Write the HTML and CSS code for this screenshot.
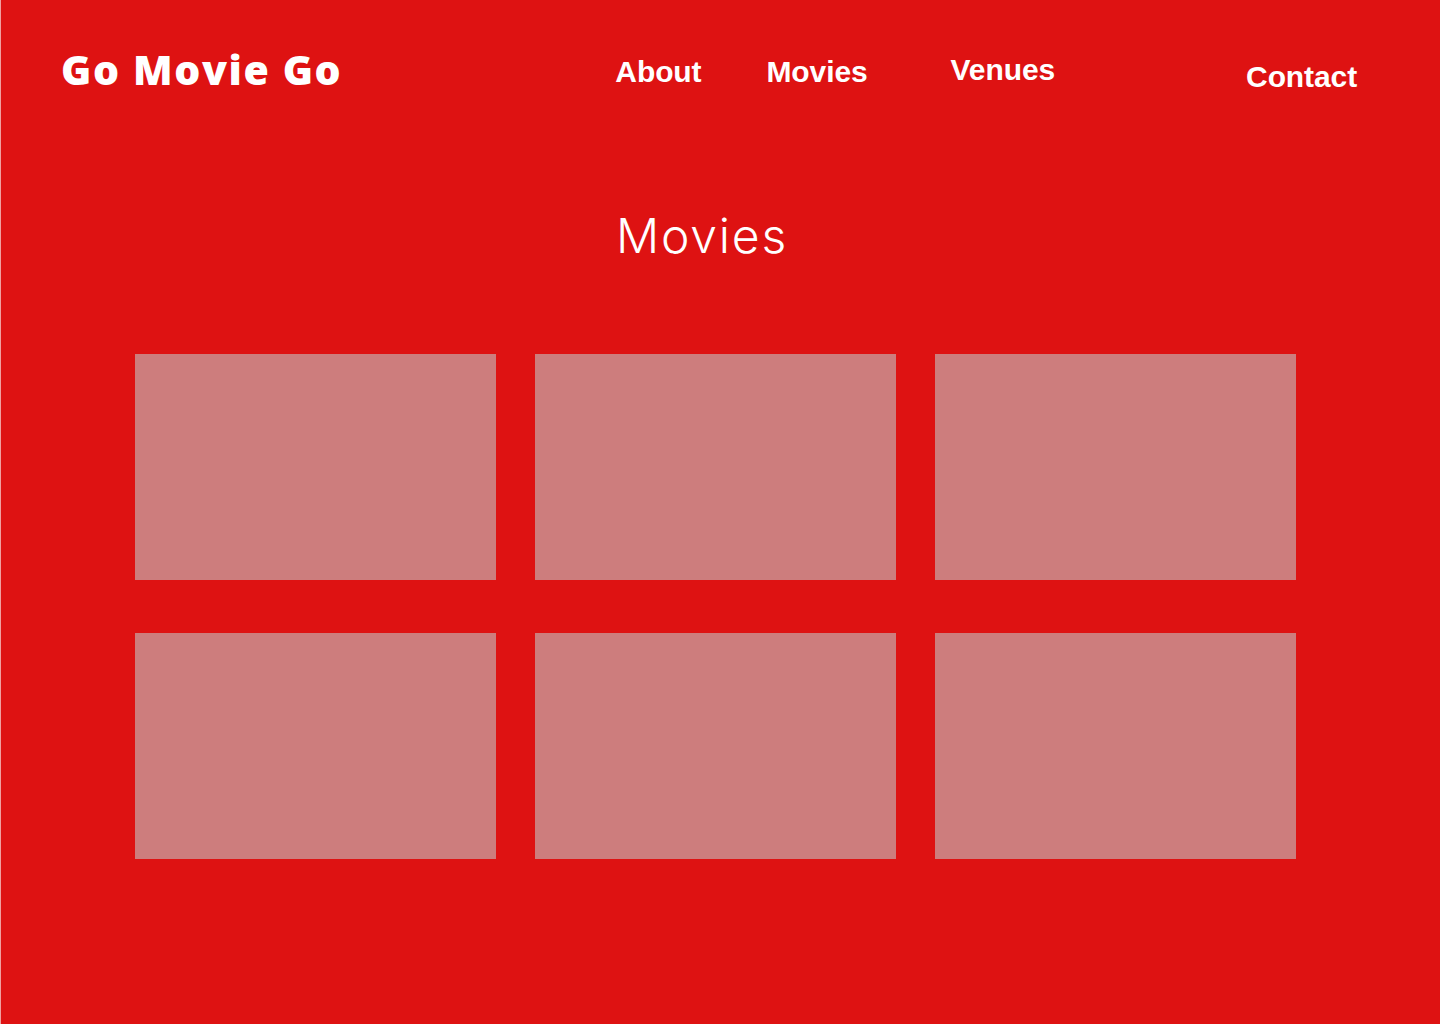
FILE: index.html
```html
<!DOCTYPE html>
<html lang="en">
<head>
<meta charset="utf-8">
<title>Go Movie Go</title>
<link rel="stylesheet" href="styles.css">
</head>
<body>
<div class="page">
  <header class="header">
    <div class="logo">Go Movie Go</div>
    <nav class="nav">
      <a class="nav-link nav-about" href="#">About</a>
      <a class="nav-link nav-movies" href="#">Movies</a>
      <a class="nav-link nav-venues" href="#">Venues</a>
      <a class="nav-link nav-contact" href="#">Contact</a>
    </nav>
  </header>
  <main class="main">
    <h1 class="title">Movies</h1>
    <div class="grid">
      <div class="card"></div>
      <div class="card"></div>
      <div class="card"></div>
      <div class="card"></div>
      <div class="card"></div>
      <div class="card"></div>
    </div>
  </main>
</div>
</body>
</html>
```
FILE: styles.css
```css
html, body {
  margin: 0;
  padding: 0;
}
body {
  background: #de1212;
  font-family: "Liberation Sans", Arial, sans-serif;
  color: #fff;
}
.page {
  width: 1440px;
  height: 1024px;
  box-sizing: border-box;
  border-left: 1px solid #f0a0a0;
  background: #de1212;
  overflow: hidden;
}
.header {
  display: flex;
  align-items: flex-start;
  height: 130px;
}
.logo {
  margin-left: 60px;
  margin-top: 41px;
  font-family: "Open Sans", sans-serif;
  font-weight: 800;
  font-size: 41px;
  line-height: 56px;
  letter-spacing: 1.6px;
  white-space: nowrap;
}
.nav {
  display: flex;
  align-items: flex-start;
}
.nav-link {
  color: #fff;
  text-decoration: none;
  font-family: "Liberation Sans", Arial, sans-serif;
  font-weight: 700;
  font-size: 30px;
  line-height: 34px;
  letter-spacing: -0.1px;
  white-space: nowrap;
}
.nav-about {
  margin-left: 273px;
  margin-top: 55px;
}
.nav-movies {
  margin-left: 65px;
  margin-top: 55px;
}
.nav-venues {
  margin-left: 83px;
  margin-top: 53px;
}
.nav-contact {
  margin-left: 191px;
  margin-top: 60px;
}
.main {
  display: flex;
  flex-direction: column;
}
.title {
  margin: 76px 0 0 615px;
  font-family: "Inter", "Open Sans", sans-serif;
  font-weight: 300;
  font-size: 48px;
  line-height: 60px;
  letter-spacing: 1.8px;
}
.grid {
  margin: 88px 0 0 134px;
  display: grid;
  grid-template-columns: repeat(3, 361px);
  grid-auto-rows: 226px;
  column-gap: 39px;
  row-gap: 53px;
}
.card {
  background: #cd7d7d;
}
```
